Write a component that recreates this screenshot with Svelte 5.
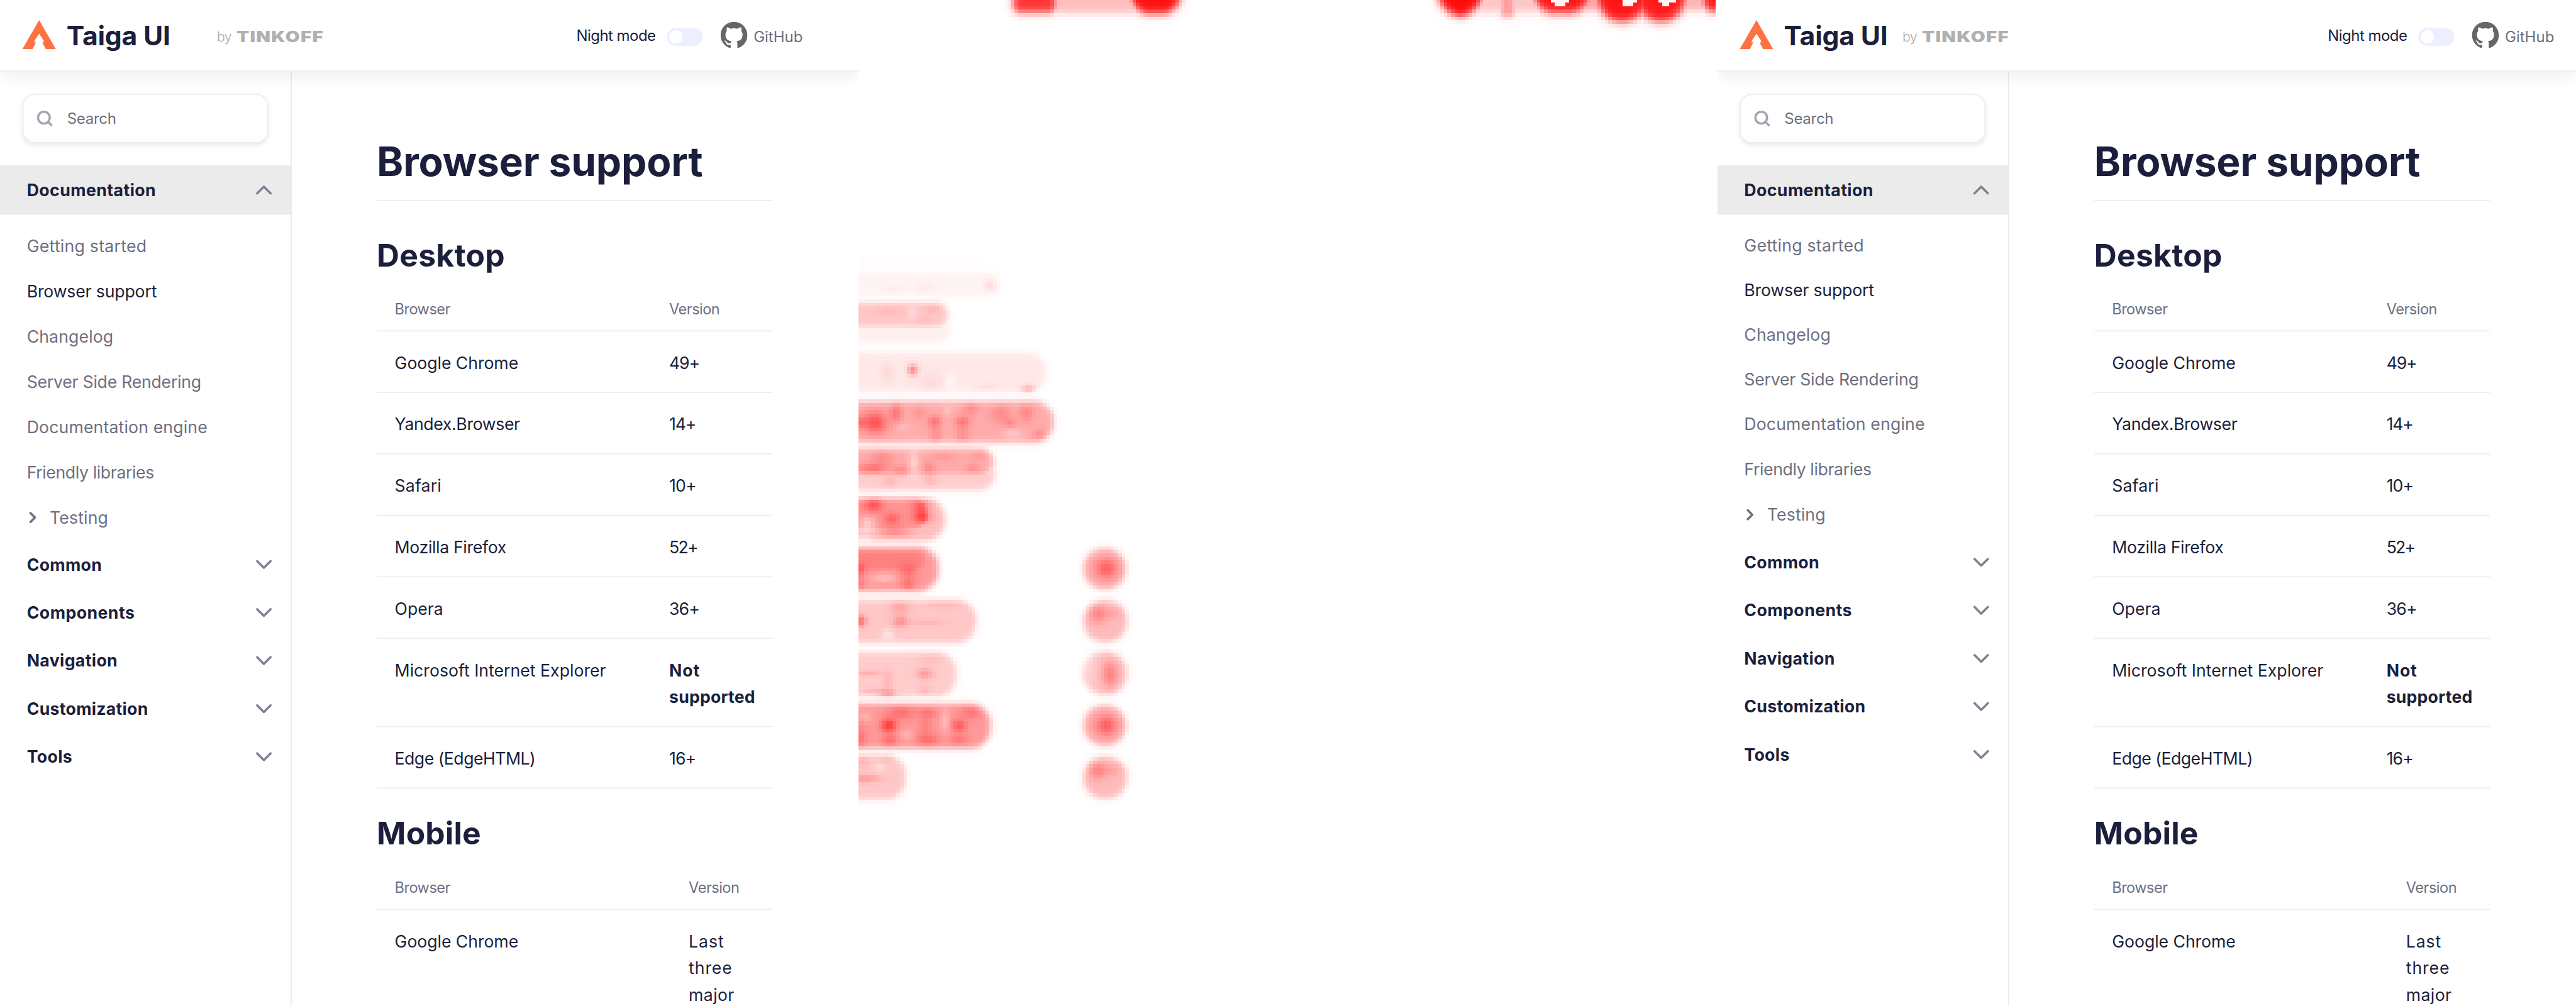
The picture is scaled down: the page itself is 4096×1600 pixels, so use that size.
<script lang="ts">
  const baseNav = [
    { label: 'Getting started', w: 214 },
    { label: 'Browser support', w: 232, active: true },
    { label: 'Changelog', w: 155 },
    { label: 'Server Side Rendering', w: 312 },
    { label: 'Documentation engine', w: 323 },
    { label: 'Friendly libraries', w: 228 },
  ];
  const sections = [
    { label: 'Common', w: 134 },
    { label: 'Components', w: 193 },
    { label: 'Navigation', w: 162 },
    { label: 'Customization', w: 217 },
    { label: 'Tools', w: 81 },
  ];
  const desktop = [
    { name: 'Google Chrome', w: 221, version: '49+', vw: 54 },
    { name: 'Yandex.Browser', w: 224, version: '14+', vw: 47 },
    { name: 'Safari', w: 84, version: '10+', vw: 48 },
    { name: 'Mozilla Firefox', w: 199, version: '52+', vw: 50 },
    { name: 'Opera', w: 87, version: '36+', vw: 54 },
    { name: 'Microsoft Internet Explorer', w: 378, lines: [['Not', 55], ['supported', 154]] as [string, number][] },
    { name: 'Edge (EdgeHTML)', w: 252, version: '16+', vw: 48 },
  ];
  const mobileLines: [string, number][] = [['Last', 63], ['three', 78], ['major', 82]];
  const panels = ['before', 'after'];

  // Spreads the letters of a label so that it takes the given width.
  function fit(node: HTMLElement, width: number) {
    node.style.letterSpacing = '0px';
    const count = (node.textContent ?? '').length;
    node.style.letterSpacing = (width - node.offsetWidth) / count + 'px';
  }

  // Soft capsules of the heat map: left, top, right, bottom, strength, corner radius, softness.
  const capsules = [
    [1400, 454, 1763, 500, 0.012], [1400, 486, 1789, 532, 0.045],
    [1400, 540, 1696, 586, 0.22], [1400, 572, 1700, 614, 0.06],
    [1400, 629, 1873, 702, 0.09], [1400, 655, 1849, 674, 0.06],
    [1400, 717, 1886, 792, 0.33],
    [1400, 801, 1778, 852, 0.33], [1400, 820, 1780, 878, 0.2],
    [1400, 890, 1691, 968, 0.26], [1400, 890, 1665, 950, 0.42],
    [1400, 977, 1679, 1059, 0.4], [1400, 979, 1662, 1026, 0.5],
    [1400, 1072, 1747, 1151, 0.22], [1400, 1166, 1712, 1247, 0.2],
    [1400, 1258, 1773, 1340, 0.4], [1400, 1350, 1621, 1431, 0.22],
    [1938, 980, 2015, 1055, 0.32], [1938, 1073, 2017, 1149, 0.27],
    [1938, 1166, 2017, 1243, 0.25], [1938, 1261, 2015, 1335, 0.32], [1938, 1353, 2017, 1429, 0.27],
    [1812, -80, 1890, 23, 0.8, 16, 4], [1860, -80, 2050, 24, 0.26, 10, 4], [2022, -80, 2113, 25, 0.94, 36, 4.2],
    [2572, -90, 2653, 30, 0.96, 46, 4.2], [2620, -80, 2780, 23, 0.22, 10, 4], [2684, -60, 2710, 30, 0.42, 10, 4],
    [2742, -80, 2846, 24, 0.92, 40, 4.6], [2820, -80, 2900, 20, 0.36, 10, 4],
    [2856, -90, 2948, 39, 0.92, 46, 4.6], [2926, -90, 3017, 39, 0.9, 46, 4.6], [2990, -60, 3120, 20, 0.3, 10, 4], [3046, -60, 3150, 21, 0.9, 20, 4.2],
  ];
  // Local hot and cool spots: centre x, centre y, spread x, spread y, change.
  const spots = [
    [1771, 510, 10, 10, 0.09], [1600, 518, 15, 8, 0.03], [1657, 516, 15, 12, 0.03],
    [1590, 556, 25, 9, 0.05], [1668, 553, 14, 7, 0.07], [1655, 573, 14, 8, 0.05], [1632, 560, 7, 12, -0.08],
    [1633, 662, 9, 10, 0.36], [1841, 697, 13, 8, 0.26], [1588, 666, 12, 16, 0.06], [1765, 694, 18, 8, 0.04], [1665, 684, 22, 18, 0.05], [1700, 684, 10, 15, -0.06],
    [1566, 756, 21, 20, 0.34], [1536, 755, 14, 12, 0.2], [1603, 738, 11, 18, 0.2], [1645, 738, 12, 14, 0.08],
    [1672, 754, 11, 10, 0.22], [1722, 754, 13, 10, 0.2], [1674, 780, 10, 16, 0.12], [1722, 780, 12, 16, 0.12], [1737, 730, 14, 12, 0.12],
    [1790, 740, 18, 18, 0.12], [1807, 756, 11, 8, 0.12], [1837, 738, 13, 16, 0.14], [1861, 778, 14, 9, 0.12], [1812, 776, 18, 9, -0.1], [1615, 764, 15, 8, -0.07], [1695, 734, 9, 10, -0.08],
    [1577, 820, 20, 16, 0.12], [1560, 838, 26, 9, 0.2], [1612, 842, 14, 9, 0.13], [1635, 826, 9, 22, -0.15], [1662, 838, 11, 11, 0.14], [1688, 816, 20, 9, 0.07], [1740, 838, 14, 9, 0.1], [1750, 815, 15, 8, 0.07], [1592, 862, 12, 11, 0.08], [1664, 860, 11, 10, 0.08],
    [1563, 901, 16, 14, 0.27], [1649, 903, 16, 14, 0.24], [1650, 925, 16, 11, 0.3], [1596, 928, 15, 11, 0.18], [1600, 952, 28, 10, 0.2], [1552, 936, 15, 14, -0.2], [1545, 966, 18, 8, -0.12],
    [1537, 1020, 11, 11, 0.22], [1624, 1022, 15, 12, 0.15], [1624, 1046, 13, 12, 0.16], [1582, 1034, 24, 8, -0.14], [1537, 1046, 10, 12, 0.13],
    [1539, 1111, 10, 10, 0.36], [1611, 1112, 14, 10, 0.2], [1610, 1085, 17, 13, 0.14], [1588, 1135, 12, 10, -0.1], [1658, 1113, 30, 5, 0.07], [1690, 1082, 34, 6, 0.07],
    [1655, 1205, 14, 10, 0.2], [1588, 1243, 16, 8, 0.25], [1588, 1220, 9, 20, 0.08], [1665, 1178, 22, 10, 0.06], [1555, 1204, 25, 5, 0.12], [1655, 1235, 12, 9, 0.08], [1560, 1236, 20, 5, 0.08],
    [1590, 1298, 14, 12, 0.36], [1612, 1274, 25, 13, 0.16], [1660, 1275, 15, 10, 0.14], [1716, 1298, 13, 11, 0.23], [1736, 1274, 18, 12, 0.14], [1659, 1324, 20, 12, 0.18], [1592, 1326, 14, 10, 0.18], [1716, 1324, 16, 10, 0.14], [1538, 1322, 12, 24, 0.15], [1690, 1290, 8, 20, -0.14], [1622, 1314, 12, 9, -0.1], [1548, 1283, 12, 9, -0.1], [1656, 1298, 11, 14, 0.1],
    [1545, 1393, 28, 7, 0.18], [1574, 1373, 10, 7, -0.08], [1590, 1358, 14, 6, 0.06], [1545, 1362, 12, 8, 0.08],
    [1979, 1017, 20, 18, 0.3], [1964, 1098, 16, 16, 0.2], [1990, 1098, 16, 10, 0.08], [1986, 1206, 15, 24, 0.24], [1950, 1195, 12, 30, -0.07], [1979, 1298, 20, 18, 0.3], [1964, 1379, 16, 16, 0.2], [1990, 1378, 16, 10, 0.08],
  ];
  // Letters of the source screen that show through: left, right, bottom.
  const holes = [[2778, 2804, 4], [2784, 2798, 10], [2904, 2930, 4], [2904, 2924, 10], [2970, 2996, 4], [2976, 2983, 10]];
  const CELL = 6.4;
  const COLS = 240;
  const ROWS = 228;
  const X0 = 1533.3;
  const Y0 = -2.4;

  function heat(canvas: HTMLCanvasElement) {
    const ctx = canvas.getContext('2d')!;
    const img = ctx.createImageData(COLS, ROWS);
    for (let r = 0; r < ROWS; r++) {
      for (let c = 0; c < COLS; c++) {
        const x = X0 + (c + 0.5) * CELL;
        const y = Y0 + (r + 0.5) * CELL;
        let a = 0;
        let cover = 0;
        for (const [l, t, rt, b, s, corner = 37, soft = 3.2] of capsules) {
          const rad = Math.min(corner, (b - t) / 2);
          const dx = Math.abs(x - (l + rt) / 2) - (rt - l) / 2 + rad;
          const dy = Math.abs(y - (t + b) / 2) - (b - t) / 2 + rad;
          const d = Math.hypot(Math.max(dx, 0), Math.max(dy, 0)) + Math.min(Math.max(dx, dy), 0) - rad;
          const k = 1 / (1 + Math.exp((d + 1) / soft));
          a = Math.max(a, s * k);
          cover = Math.max(cover, k);
        }
        for (const [sx, sy, wx, wy, v] of spots) {
          a += cover * v * Math.exp(-(((x - sx) / wx) ** 2) - ((y - sy) / wy) ** 2);
        }
        for (const [l, rt, b] of holes) if (x > l && x < rt && y < b) a = 0.04;
        a = Math.min(Math.max(a, 0), 1);
        const i = (r * COLS + c) * 4;
        img.data[i] = 255;
        img.data[i + 3] = Math.round(a * 255);
      }
    }
    ctx.putImageData(img, 0, 0);
  }
</script>

{#snippet cell(text: string, w: number)}
  <span class="fit" use:fit={w}>{text}</span>
{/snippet}

{#snippet chevron()}
  <svg class="chevron" viewBox="0 0 28 18" fill="none"><path d="M2 3l12 12L26 3" /></svg>
{/snippet}

{#snippet page(kind: string)}
  <div class="page {kind}">
    <header>
      <svg class="logo" viewBox="0 0 60 52"><path fill="#ff7043" d="M30 0L60 52H42L35.500 40H39.500L36.500 37H38.500L30 24.500 21.500 37H23.500L20.500 40H24.500L18 52H0z" /></svg>
      <span class="brand">{@render cell('Taiga UI', 186)}</span>
      <span class="by">{@render cell('by', 26)}</span>
      <span class="owner">{@render cell('TINKOFF', 131)}</span>
      <span class="mode">{@render cell('Night mode', 142)}</span>
      <span class="toggle"><i></i></span>
      <svg class="github" viewBox="0 0 16 15.600"><path fill="#666" d="M8 0C3.580 0 0 3.580 0 8c0 3.540 2.290 6.530 5.470 7.590.4.070.55-.17.55-.38 0-.19-.010-.82-.010-1.490-2.010.37-2.530-.49-2.690-.94-.09-.23-.48-.94-.82-1.130-.28-.15-.68-.52-.010-.53.63-.010 1.080.58 1.230.82.72 1.210 1.870.87 2.330.66.070-.52.28-.87.51-1.070-1.780-.2-3.640-.89-3.640-3.950 0-.87.31-1.590.82-2.150-.08-.2-.36-1.020.08-2.120 0 0 .67-.21 2.200.82.64-.18 1.320-.27 2-.27s1.360.09 2 .27c1.530-1.040 2.200-.82 2.200-.82.44 1.100.16 1.920.08 2.120.51.56.82 1.270.82 2.150 0 3.070-1.870 3.750-3.650 3.950.29.25.54.73.54 1.480 0 1.070-.010 1.930-.010 2.200 0 .21.15.46.55.38A8.010 8.010 0 0 0 16 8c0-4.420-3.580-8-8-8z" /></svg>
      <span class="gh">{@render cell('GitHub', 88)}</span>
    </header>
    <div class="body">
      <aside>
        <div class="search">
          <svg viewBox="0 0 28 28" fill="none"><circle cx="12.500" cy="12.500" r="10.500" /><path d="M20 20l6 6" /></svg>
          {@render cell('Search', 88)}
        </div>
        <div class="section open">{@render cell('Documentation', 231)}{@render chevron()}</div>
        <nav>
          {#each baseNav as item}
            <div class="item" class:active={item.active}>{@render cell(item.label, item.w)}</div>
          {/each}
          <div class="item testing">
            <svg viewBox="0 0 14 22" fill="none"><path d="M2.500 3l8 8-8 8" /></svg>
            {@render cell('Testing', 105)}
          </div>
        </nav>
        {#each sections as s}
          <div class="section">{@render cell(s.label, s.w)}{@render chevron()}</div>
        {/each}
      </aside>
      <main>
        <h1>{@render cell('Browser support', 583)}</h1>
        <h2>{@render cell('Desktop', 229)}</h2>
        <div class="row head"><span>{@render cell('Browser', 99)}</span><span>{@render cell('Version', 90)}</span></div>
        {#each desktop as b}
          <div class="row">
            <span>{@render cell(b.name, b.w)}</span>
            {#if b.lines}
              <strong>{#each b.lines as [t, w]}<div>{@render cell(t, w)}</div>{/each}</strong>
            {:else}
              <span>{@render cell(b.version ?? '', b.vw ?? 0)}</span>
            {/if}
          </div>
        {/each}
        <h2 class="second">{@render cell('Mobile', 187)}</h2>
        <div class="row head narrow"><span>{@render cell('Browser', 99)}</span><span>{@render cell('Version', 90)}</span></div>
        <div class="row narrow">
          <span>{@render cell('Google Chrome', 221)}</span>
          <span>{#each mobileLines as [t, w]}<div>{@render cell(t, w)}</div>{/each}</span>
        </div>
      </main>
    </div>
  </div>
{/snippet}

<div class="viewport">
  <div class="board">
    {@render page(panels[0])}
    <div class="diff"><canvas width={COLS} height={ROWS} use:heat></canvas></div>
    {@render page(panels[1])}
  </div>
</div>

<style>
  :global(body) { margin: 0; background: #fff; overflow: hidden; }
  .viewport { width: 4096px; height: 1600px; overflow: hidden; }
  .board {
    display: flex;
    width: 4608px;
    height: 1800px;
    transform: scale(0.888889);
    transform-origin: 0 0;
    font-family: Inter, sans-serif;
    font-size: 30px;
    color: #1b1f3b;
    background: #fff;
  }
  .page { width: 1536px; height: 1800px; overflow: hidden; flex: none; }
  .fit { display: inline-block; white-space: nowrap; }
  header {
    position: relative;
    box-sizing: border-box;
    height: 128px;
    display: flex;
    align-items: center;
    padding: 0 100px 2px 40px;
    border-bottom: 2px solid #ededed;
    background: #fff;
    box-shadow: 0 8px 28px rgba(0, 0, 0, 0.07);
  }
  .after header { padding-right: 39px; }
  .logo { width: 60px; height: 52px; }
  .brand { font-size: 48px; font-weight: 700; margin: 3px 0 0 19px; width: 186px; white-space: nowrap; }
  .by { font-size: 24px; font-weight: 300; color: #a8a8a8; margin: 7px 9px 0 83px; white-space: nowrap; }
  .after .by { margin-left: 26px; }
  .owner { width: 157px; font-size: 28px; font-weight: 900; color: #b0b0b0; margin-top: 5px; white-space: nowrap; transform: scaleX(1.19); transform-origin: 0 50%; }
  .mode { font-size: 27px; margin: 3px 20px 0 auto; }
  .toggle { box-sizing: border-box; width: 64px; height: 32px; padding: 4px; border-radius: 16px; background: #ebefff; margin: 8px 32px 0 0; }
  .toggle i { display: block; width: 24px; height: 24px; border-radius: 50%; background: #fff; }
  .github { width: 48px; height: 47px; margin-right: 11px; }
  .gh { font-size: 27px; color: #6d6f82; margin-top: 7px; }
  .body { display: flex; height: 1672px; }
  aside { width: 520px; border-right: 2px solid #ebebeb; flex: none; }
  .search {
    box-sizing: border-box;
    display: flex;
    align-items: center;
    gap: 26px;
    width: 440px;
    height: 88px;
    margin: 40px 0 40px 40px;
    padding-left: 24px;
    border: 2px solid #ededed;
    border-radius: 22px;
    background: #fff;
    box-shadow: 0 4px 8px rgba(0, 0, 0, 0.08);
    font-size: 27px;
    color: #6d6f82;
  }
  .search svg { width: 28px; height: 28px; stroke: #a4a5b1; stroke-width: 4; stroke-linecap: round; }
  .section {
    display: flex;
    align-items: center;
    justify-content: space-between;
    height: 86px;
    padding: 0 34px 0 48px;
    font-weight: 700;
  }
  .section.open { height: 88px; background: #ebebeb; }
  .chevron { width: 28px; height: 18px; stroke: #7d8091; stroke-width: 4; stroke-linecap: round; stroke-linejoin: round; }
  .open .chevron { transform: rotate(180deg); }
  nav { padding-top: 15px; }
  .item { display: flex; align-items: center; height: 81px; padding-left: 48px; color: #6d6f82; }
  .item.active { color: #1b1f3b; }
  .after .item { height: 80px; }
  .after .testing { height: 84px; }
  .before .testing { height: 82px; }
  .testing svg { width: 14px; height: 22px; margin: 0 23px 0 4px; stroke: #6d6f82; stroke-width: 4; stroke-linecap: round; stroke-linejoin: round; }
  main { width: 708px; padding: 112px 0 0 152px; }
  h1 { margin: 0; padding-bottom: 20px; border-bottom: 2px solid #ededed; font-size: 72px; line-height: 98px; font-weight: 700; height: 98px; }
  h2 { margin: 65px 0 24px; font-size: 56px; line-height: 64px; font-weight: 700; height: 64px; }
  h2.second { margin: 48px 0 25px; }
  .row {
    display: grid;
    grid-template-columns: 491px 1fr;
    padding: 31.5px 0 28.5px 32px;
    border-bottom: 2px solid #ededed;
    line-height: 48px;
  }
  .row div, .row span { white-space: nowrap; }
  .row.narrow { grid-template-columns: 526px 1fr; }
  .row.head { height: 48px; padding: 15px 0 15px 32px; font-size: 26.5px; color: #6d6f82; }
  .diff { position: relative; width: 1533px; margin-right: 3px; height: 1800px; overflow: hidden; flex: none; }
  canvas { position: absolute; left: -2.7px; top: -2.4px; width: 1536px; height: 1459.2px; image-rendering: pixelated; }
</style>
